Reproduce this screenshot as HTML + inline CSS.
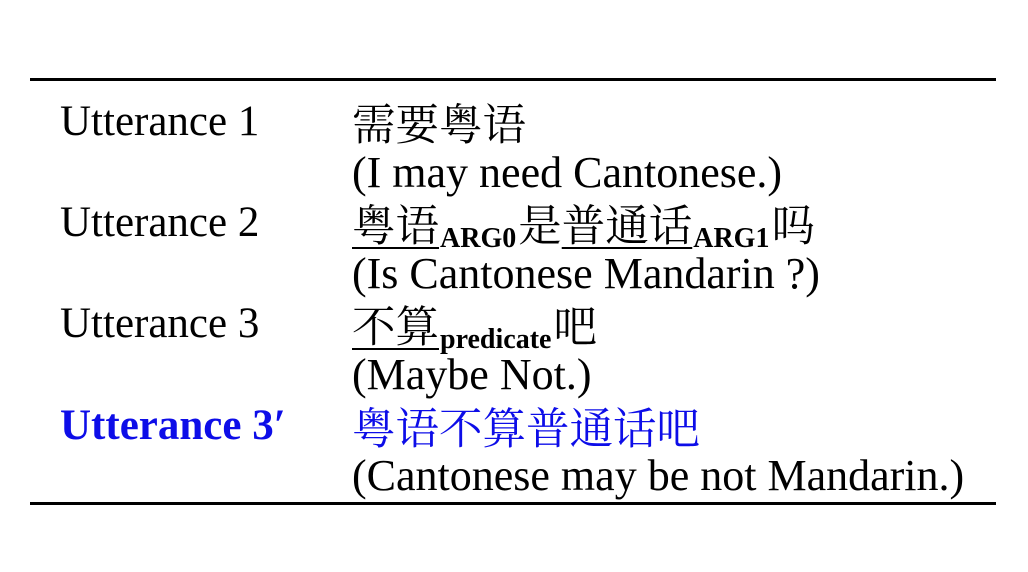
<!DOCTYPE html>
<html><head><meta charset="utf-8"><style>
body{margin:0;background:#fff;width:1028px;height:572px;overflow:hidden;position:relative;font-family:"Liberation Serif","Noto Serif CJK SC",serif;font-size:43px;color:#000}
.rule{position:absolute;left:30px;width:966px;height:3px;background:#000}
.row{position:absolute;height:50.6px;line-height:50.6px;white-space:nowrap}
.l{left:60px}.r{left:352px;font-size:44px}
.cjk{font-family:"Noto Serif CJK SC","Noto Sans CJK SC",serif;font-size:43.5px}
sub{font-size:28px;font-weight:bold;vertical-align:-6px;line-height:0;font-family:"Liberation Serif",serif;padding:0 2px 0 1px}
u{text-decoration:underline;text-decoration-thickness:1.5px;text-underline-offset:6px}
.b{color:#0d0de8}
</style></head><body>
<div class="rule" style="top:78px"></div>
<div class="rule" style="top:502px"></div>
<div class="row l" style="top:97px">Utterance 1</div>
<div class="row r cjk" style="top:97px">需要粤语</div>
<div class="row r" style="top:148px">(I may need Cantonese.)</div>
<div class="row l" style="top:198px">Utterance 2</div>
<div class="row r" style="top:198px"><u class="cjk">粤语</u><sub>ARG0</sub><span class="cjk">是</span><u class="cjk">普通话</u><sub>ARG1</sub><span class="cjk">吗</span></div>
<div class="row r" style="top:249px">(Is Cantonese Mandarin ?)</div>
<div class="row l" style="top:299px">Utterance 3</div>
<div class="row r" style="top:299px"><u class="cjk">不算</u><sub>predicate</sub><span class="cjk">吧</span></div>
<div class="row r" style="top:350px">(Maybe Not.)</div>
<div class="row l b" style="top:401px;font-weight:bold">Utterance 3′</div>
<div class="row r cjk b" style="top:401px">粤语不算普通话吧</div>
<div class="row r" style="top:451px">(Cantonese may be not Mandarin.)</div>
</body></html>
